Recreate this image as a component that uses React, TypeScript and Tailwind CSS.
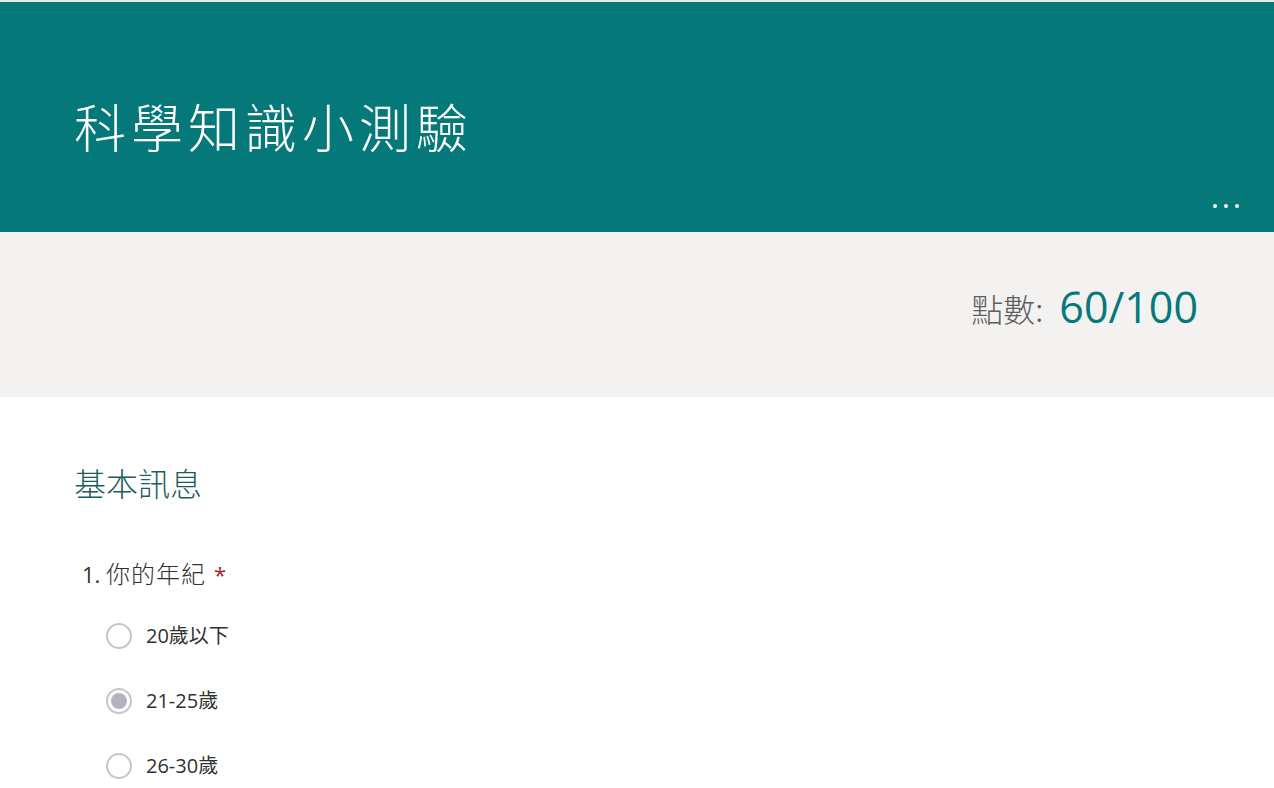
const options = [
  { label: '20歲以下', checked: false },
  { label: '21-25歲', checked: true },
  { label: '26-30歲', checked: false },
];

function Radio({ checked }: { checked: boolean }) {
  return (
    <span className="flex h-[26px] w-[26px] items-center justify-center rounded-full border-2 border-[#c8c6c4] bg-white">
      {checked && <span className="h-[16px] w-[16px] rounded-full bg-[#b3b2be]" />}
    </span>
  );
}

export default function App() {
  return (
    <div className="min-h-screen w-full bg-white font-['Open_Sans','Noto_Sans_CJK_TC',sans-serif]">
      <div className="h-[2px] bg-[#e4eded]" />
      <header className="relative h-[230px] bg-[#05787a] pl-[74px] pt-[92px]">
        <h1 className="text-[52px] font-light leading-[64px] tracking-[5px] text-white font-['Noto_Sans_CJK_TC',sans-serif]">
          科學知識小測驗
        </h1>
        <div className="absolute bottom-[24px] right-[35px] flex gap-[7px]">
          <span className="h-[4px] w-[4px] rounded-full bg-white" />
          <span className="h-[4px] w-[4px] rounded-full bg-white" />
          <span className="h-[4px] w-[4px] rounded-full bg-white" />
        </div>
      </header>

      <section className="flex h-[165px] items-center justify-end bg-[#f3f2f1] pb-[16px] pr-[76px]">
        <span className="mr-[16px] mt-[2px] text-[32px] font-light text-[#605e5c] font-['Noto_Sans_CJK_TC',sans-serif]">
          點數:
        </span>
        <span className="text-[43px] leading-none text-[#05787a]">60/100</span>
      </section>

      <main className="pl-[74px] pt-[63px]">
        <h2 className="text-[32px] font-light leading-[44px] text-[#1d5c5c] font-['Noto_Sans_CJK_TC',sans-serif]">
          基本訊息
        </h2>
        <div className="mt-[53px] flex items-baseline pl-[8px] text-[22px] leading-[32px] text-[#323130]">
          <span>1.&nbsp;</span>
          <span className="text-[24px] font-light tracking-[1px] font-['Noto_Sans_CJK_TC',sans-serif]">你的年紀</span>
          <span className="ml-[8px] text-[#a4262c]">*</span>
        </div>
        <ul className="mt-[33px] flex flex-col gap-[39px] pl-[32px]">
          {options.map((o) => (
            <li key={o.label} className="flex h-[26px] items-center gap-[14px]">
              <Radio checked={o.checked} />
              <span className="text-[20px] text-[#323130]">{o.label}</span>
            </li>
          ))}
        </ul>
      </main>
    </div>
  );
}
